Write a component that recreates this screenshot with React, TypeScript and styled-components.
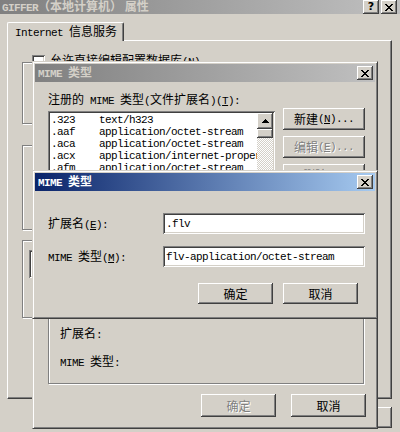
import styled, { createGlobalStyle } from "styled-components";

const GlobalStyle = createGlobalStyle`
  html, body { margin: 0; padding: 0; }
  body {
    background: #d4d0c8;
    font-family: "Noto Sans CJK SC", "DejaVu Sans", sans-serif;
    font-size: 12px;
    line-height: 12px;
    color: #000;
  }
  * { box-sizing: border-box; }
`;

const raised = `
  background: #d4d0c8;
  box-shadow: inset -1px -1px #404040, inset 1px 1px #fff, inset -2px -2px #808080;
`;

const sunken = `
  box-shadow: inset 1px 1px #808080, inset -1px -1px #fff, inset 2px 2px #404040, inset -2px -2px #d4d0c8;
`;

// latin runs: the old 9pt SimSun draws these half width, 6px a char
const L = styled.span`
  font-family: "Liberation Mono", monospace;
  font-size: 11px;
  letter-spacing: -0.6px;
`;

const Desktop = styled.div`
  position: relative;
  width: 400px;
  height: 432px;
  overflow: hidden;
  background: #d4d0c8;
`;

/* ---------- property sheet behind everything ---------- */

const PropSheet = styled.div`
  display: flex;
  flex-direction: column;
  height: 100%;
`;

const Caption = styled.div<{ $active?: boolean }>`
  display: flex;
  align-items: center;
  flex-shrink: 0;
  height: 18px;
  padding: 0 2px 0 3px;
  background: ${({ $active }) =>
    $active
      ? "linear-gradient(to right, #0a246a, #a6caf0)"
      : "linear-gradient(to right, #808080, #c0c0c0)"};
  color: ${({ $active }) => ($active ? "#fff" : "#d4d0c8")};
  font-weight: bold;
  white-space: nowrap;
`;

const SheetCaption = styled(Caption)`
  height: 14px;
  padding: 0 3px 0 2px;
`;

const CapTitle = styled.span`
  flex: 1;
  overflow: hidden;
`;

const CapButtons = styled.div`
  display: flex;
  gap: 2px;
`;

const CapButton = styled.div`
  ${raised}
  width: 16px;
  height: 14px;
  display: flex;
  align-items: center;
  justify-content: center;
  color: #000;
  font-family: "DejaVu Sans", sans-serif;
  font-size: 11px;
  font-weight: bold;
`;

const TabStrip = styled.div`
  display: flex;
  padding: 8px 0 0 7px;
`;

const Tab = styled.div`
  position: relative;
  z-index: 1;
  width: 117px;
  height: 19px;
  margin-bottom: -1px;
  padding: 2px 0 0 7px;
  background: #d4d0c8;
  border: 1px solid;
  border-color: #fff #404040 transparent #fff;
  border-bottom: none;
  border-radius: 2px 2px 0 0;
  box-shadow: inset -1px 0 #808080;
  white-space: nowrap;
`;

const TabPanel = styled.div`
  height: 359px;
  margin: 0 8px 0 7px;
  padding: 12px 0 0 14px;
  border: 1px solid;
  border-color: #fff #404040 #404040 #fff;
  box-shadow: inset -1px -1px #808080;
  display: flex;
  flex-direction: column;
`;

const CheckRow = styled.div`
  display: flex;
  align-items: flex-start;
  gap: 5px;
  height: 9px;
  margin-left: 10px;
  line-height: 13px;
  white-space: nowrap;
`;

const CheckBox = styled.div`
  width: 13px;
  height: 13px;
  margin-top: 2px;
  background: #fff;
  ${sunken}
`;

const Group = styled.div<{ $h: number; $gap: number }>`
  width: 330px;
  height: ${({ $h }) => $h}px;
  margin-top: ${({ $gap }) => $gap}px;
  padding: 9px 0 0 6px;
  border: 1px solid #808080;
  box-shadow: 1px 1px #fff, inset 1px 1px #fff;
`;

const HiddenField = styled.div`
  width: 100px;
  height: 28px;
  background: #fff;
  ${sunken}
`;

const SheetButtons = styled.div`
  display: flex;
  justify-content: flex-end;
  gap: 6px;
  padding: 8px 8px 0 0;
`;

/* ---------- dialogs ---------- */

const Dialog = styled.div<{ $top: number; $height: number }>`
  position: absolute;
  left: 32px;
  top: ${({ $top }) => $top}px;
  width: 346px;
  height: ${({ $height }) => $height}px;
  padding: 2px;
  background: #d4d0c8;
  border: 1px solid;
  border-color: #d4d0c8 #404040 #404040 #d4d0c8;
  box-shadow: inset 1px 1px #fff, inset -1px -1px #808080;
  display: flex;
  flex-direction: column;
`;

const Button = styled.div<{ $w: number; $h: number; $disabled?: boolean }>`
  ${raised}
  width: ${({ $w }) => $w}px;
  height: ${({ $h }) => $h}px;
  flex-shrink: 0;
  display: flex;
  align-items: center;
  justify-content: center;
  white-space: nowrap;
  color: ${({ $disabled }) => ($disabled ? "#808080" : "#000")};
  text-shadow: ${({ $disabled }) => ($disabled ? "1px 1px #fff" : "none")};
`;

const MimeBody = styled.div`
  flex: 1;
  display: flex;
  flex-direction: column;
  padding: 0 11px 0 13px;
`;

const ListLabel = styled.div`
  margin-top: 11px;
  height: 12px;
  white-space: nowrap;
`;

const ListRow = styled.div`
  display: flex;
  align-items: flex-start;
  margin-top: 3px;
`;

const ListBox = styled.div`
  display: flex;
  width: 227px;
  height: 150px;
  margin-top: 3px;
  padding: 2px;
  background: #fff;
  ${sunken}
`;

const ListItems = styled.div`
  flex: 1;
  overflow: hidden;
  padding: 1px 0 0 1px;
  font-family: "Liberation Mono", monospace;
  font-size: 11px;
  letter-spacing: -0.6px;
`;

const ListItem = styled.div`
  display: grid;
  grid-template-columns: 48px auto;
  height: 12px;
  line-height: 12px;
  white-space: nowrap;
`;

const ScrollBar = styled.div`
  width: 16px;
  display: flex;
  flex-direction: column;
`;

const ScrollArrow = styled.div`
  ${raised}
  height: 16px;
  display: flex;
  align-items: center;
  justify-content: center;
`;

const ScrollThumb = styled.div`
  ${raised}
  height: 9px;
`;

const ScrollTrack = styled.div`
  flex: 1;
  background-image: conic-gradient(#fff 25%, #d4d0c8 0 50%, #fff 0 75%, #d4d0c8 0);
  background-size: 2px 2px;
`;

const SideButtons = styled.div`
  display: flex;
  flex-direction: column;
  gap: 6px;
  margin-left: 8px;
`;

const Details = styled.div`
  height: 88px;
  margin-top: 35px;
  padding: 30px 0 0 11px;
  border: 1px solid #808080;
  box-shadow: 1px 1px #fff, inset 1px 1px #fff;
  display: flex;
  flex-direction: column;
  gap: 16px;
`;

const DetailLine = styled.div`
  height: 12px;
  white-space: nowrap;
`;

const FooterButtons = styled.div<{ $gap: number; $top: number }>`
  display: flex;
  justify-content: flex-end;
  gap: ${({ $gap }) => $gap}px;
  margin-top: ${({ $top }) => $top}px;
`;

const MimeFooter = styled(FooterButtons)`
  margin-right: -2px;
`;

const EditBody = styled.div`
  flex: 1;
  display: flex;
  flex-direction: column;
  padding: 22px 17px 0 13px;
`;

const FormGrid = styled.div`
  display: grid;
  grid-template-columns: 115px 202px;
  row-gap: 12px;
  align-items: center;
`;

const FieldLabel = styled.div`
  white-space: nowrap;
`;

const Field = styled.div`
  height: 21px;
  padding: 0 3px;
  background: #fff;
  ${sunken}
  display: flex;
  align-items: center;
  font-family: "Liberation Mono", monospace;
  font-size: 11px;
  letter-spacing: -0.6px;
  white-space: nowrap;
  overflow: hidden;
`;

const CloseGlyph = () => (
  <svg width="8" height="7" viewBox="0 0 8 7" shapeRendering="crispEdges">
    <path
      fill="#000"
      d="M0 0h2v1h-2z M6 0h2v1h-2z M1 1h2v1h-2z M5 1h2v1h-2z M2 2h4v1h-4z M3 3h2v1h-2z M2 4h4v1h-4z M1 5h2v1h-2z M5 5h2v1h-2z M0 6h2v1h-2z M6 6h2v1h-2z"
    />
  </svg>
);

const UpGlyph = () => (
  <svg width="7" height="4" viewBox="0 0 7 4" shapeRendering="crispEdges">
    <path fill="#000" d="M3 0h1v1h-1z M2 1h3v1h-3z M1 2h5v1h-5z M0 3h7v1h-7z" />
  </svg>
);

const mimeTypes = [
  [".323", "text/h323"],
  [".aaf", "application/octet-stream"],
  [".aca", "application/octet-stream"],
  [".acx", "application/internet-property-stream"],
  [".afm", "application/octet-stream"],
  [".ai", "application/postscript"],
  [".aif", "audio/x-aiff"],
  [".aifc", "audio/aiff"],
  [".aiff", "audio/aiff"],
  [".art", "image/x-jg"],
  [".asd", "application/octet-stream"],
  [".asf", "video/x-ms-asf"],
];

export default function App() {
  return (
    <>
      <GlobalStyle />
      <Desktop>
        <PropSheet>
          <SheetCaption>
            <CapTitle>
              <L>GIFFER</L>（本地计算机） 属性
            </CapTitle>
            <CapButtons>
              <CapButton>?</CapButton>
              <CapButton>
                <CloseGlyph />
              </CapButton>
            </CapButtons>
          </SheetCaption>
          <TabStrip>
            <Tab>
              <L>Internet </L>信息服务
            </Tab>
          </TabStrip>
          <TabPanel>
            <CheckRow>
              <CheckBox />
              <span>
                允许直接编辑配置数据库<L>(<u>N</u>)</L>
              </span>
            </CheckRow>
            <Group $h={62} $gap={0} />
            <Group $h={85} $gap={21} />
            <Group $h={78} $gap={10}>
              <HiddenField />
            </Group>
          </TabPanel>
          <SheetButtons>
            <Button $w={75} $h={21}>确定</Button>
            <Button $w={75} $h={21}>取消</Button>
            <Button $w={75} $h={21}>
              应用<L>(A)</L>
            </Button>
          </SheetButtons>
        </PropSheet>

        <Dialog $top={61} $height={368}>
          <Caption>
            <CapTitle>
              <L>MIME </L>类型
            </CapTitle>
            <CapButton>
              <CloseGlyph />
            </CapButton>
          </Caption>
          <MimeBody>
            <ListLabel>
              注册的<L> MIME </L>类型<L>(</L>文件扩展名<L>)(<u>T</u>):</L>
            </ListLabel>
            <ListRow>
              <ListBox>
                <ListItems>
                  {mimeTypes.map(([ext, type]) => (
                    <ListItem key={ext}>
                      <span>{ext}</span>
                      <span>{type}</span>
                    </ListItem>
                  ))}
                </ListItems>
                <ScrollBar>
                  <ScrollArrow>
                    <UpGlyph />
                  </ScrollArrow>
                  <ScrollThumb />
                  <ScrollTrack />
                </ScrollBar>
              </ListBox>
              <SideButtons>
                <Button $w={82} $h={22}>
                  新建<L>(<u>N</u>)...</L>
                </Button>
                <Button $w={82} $h={22} $disabled>
                  编辑<L>(<u>E</u>)...</L>
                </Button>
                <Button $w={82} $h={22} $disabled>
                  删除<L>(<u>R</u>)</L>
                </Button>
              </SideButtons>
            </ListRow>
            <Details>
              <DetailLine>扩展名<L>:</L></DetailLine>
              <DetailLine>
                <L>MIME </L>类型<L>:</L>
              </DetailLine>
            </Details>
            <MimeFooter $gap={15} $top={10}>
              <Button $w={75} $h={23} $disabled>确定</Button>
              <Button $w={75} $h={23}>取消</Button>
            </MimeFooter>
          </MimeBody>
        </Dialog>

        <Dialog $top={170} $height={149}>
          <Caption $active>
            <CapTitle>
              <L>MIME </L>类型
            </CapTitle>
            <CapButton>
              <CloseGlyph />
            </CapButton>
          </Caption>
          <EditBody>
            <FormGrid>
              <FieldLabel>
                扩展名<L>(<u>E</u>):</L>
              </FieldLabel>
              <Field>.flv</Field>
              <FieldLabel>
                <L>MIME </L>类型<L>(<u>M</u>):</L>
              </FieldLabel>
              <Field>flv-application/octet-stream</Field>
            </FormGrid>
            <FooterButtons $gap={10} $top={16}>
              <Button $w={75} $h={21}>确定</Button>
              <Button $w={75} $h={21}>取消</Button>
            </FooterButtons>
          </EditBody>
        </Dialog>
      </Desktop>
    </>
  );
}
